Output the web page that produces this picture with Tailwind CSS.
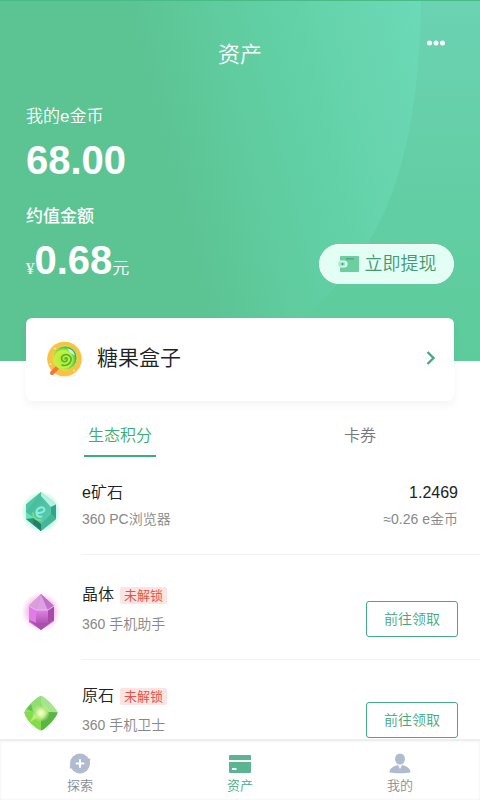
<!DOCTYPE html>
<html lang="zh-CN">
<head>
    <meta charset="UTF-8">
    <meta name="viewport" content="width=device-width, initial-scale=1.0">
    <title>资产</title>
    <script src="https://cdn.jsdelivr.net/npm/@tailwindcss/browser@4"></script>
</head>
<body class="flex h-screen flex-col bg-white font-['Liberation_Sans','Noto_Sans_CJK_SC',sans-serif] font-[350] text-[#222]">
    <main class="min-h-0 flex-1 overflow-y-auto [scrollbar-width:none]">
        <!-- 顶部资产 -->
        <header class="relative h-[361px] border-t border-[#48bb86] bg-[#5cc392] px-[26px] text-white">
            <svg class="absolute inset-0 h-full w-full" viewBox="0 0 480 361" preserveAspectRatio="none" aria-hidden="true">
                <defs>
                    <linearGradient id="outer" x1="0" y1="0" x2="0" y2="1">
                        <stop offset="0" stop-color="#6bd2b2"/>
                        <stop offset="0.6" stop-color="#62cea3"/>
                        <stop offset="1" stop-color="#5dcb9b"/>
                    </linearGradient>
                    <linearGradient id="inner" gradientUnits="userSpaceOnUse" x1="130" y1="60" x2="425" y2="-15">
                        <stop offset="0" stop-color="#5cc392"/>
                        <stop offset="0.45" stop-color="#61cfa4"/>
                        <stop offset="1" stop-color="#6ddab8"/>
                    </linearGradient>
                </defs>
                <rect width="480" height="361" fill="url(#outer)"/>
                <path d="M0 0H421C418 160 385 250 303 317C280 335 255 350 230 361H0z" fill="url(#inner)"/>
            </svg>
            <div class="relative">
                <h1 class="pt-9 text-center text-[22px] leading-9">资产</h1>
                <button type="button" aria-label="更多" class="absolute top-8 right-2 h-5 w-5">
                    <svg class="h-5 w-5" viewBox="0 0 20 20" fill="#fff">
                        <circle cx="3.500" cy="10" r="2.500"/>
                        <circle cx="10" cy="10" r="2.500"/>
                        <circle cx="16.500" cy="10" r="2.500"/>
                    </svg>
                </button>
                <p class="pt-8 text-[17px] leading-6">我的e金币</p>
                <p class="pt-[7px] text-[40px] leading-12 font-bold">68.00</p>
                <p class="pt-[21px] text-[17px] leading-6 font-medium">约值金额</p>
                <div class="flex items-start justify-between pt-[7px]">
                    <p class="text-[17px] leading-12"><span class="font-['Liberation_Serif','Noto_Sans_CJK_SC',serif]">¥</span><span class="text-[40px] font-bold">0.68</span><span>元</span></p>
                    <button type="button" class="mt-2 flex h-10 w-[135px] items-center justify-center gap-1 rounded-full border border-white bg-[#e3fef4] text-[18px] text-[#459873]">
                        <svg class="h-5 w-6" viewBox="0 0 24 20" aria-hidden="true">
                            <rect x="3" y="2" width="19" height="16" rx="1" fill="#6bcf9f"/>
                            <rect x="9" y="4" width="8" height="1.600" fill="#4fae80"/>
                            <path d="M3 6.500h4a3.500 3.500 0 0 1 0 7H3z" fill="#e3fef4"/>
                            <path d="M1.500 7.500h4.500a2.500 2.500 0 0 1 0 5H1.500z" fill="#a5ead0"/>
                            <circle cx="5.500" cy="10" r="1" fill="#3d8a66"/>
                        </svg>
                        立即提现
                    </button>
                </div>
            </div>
        </header>

        <!-- 糖果盒子 -->
        <a href="#" class="relative mx-[26px] -mt-[43px] flex h-[83px] items-center rounded-md bg-white pr-[17px] pb-[3px] pl-[18px] shadow-[0_4px_8px_rgba(0,60,40,0.05)]">
            <svg class="h-10 w-10" viewBox="0 0 40 40" aria-hidden="true">
                <defs>
                    <radialGradient id="candy" cx="0.42" cy="0.56" r="0.6">
                        <stop offset="0" stop-color="#b4e82e"/>
                        <stop offset="0.6" stop-color="#c9f03f"/>
                        <stop offset="0.85" stop-color="#52c043"/>
                        <stop offset="1" stop-color="#24a047"/>
                    </radialGradient>
                </defs>
                <ellipse cx="20.500" cy="37" rx="12" ry="3" fill="#f2f4f6"/>
                <circle cx="20.500" cy="21" r="17.300" fill="#f9c33f"/>
                <path d="M13.500 29.500L8 35" stroke="#f0783a" stroke-width="4" stroke-linecap="round"/>
                <circle cx="21" cy="20" r="12" fill="url(#candy)" stroke="#c9ee74" stroke-width="0.800"/>
                <path d="M21 21c0-1.500 2-1.500 2.300 0s-1.500 3.500-3.800 2.500-3-5 .5-6.500 8 1.500 7 5.500-5.500 6-9 4.500" fill="none" stroke="#48b43c" stroke-width="1.600" stroke-linecap="round"/>
                <path d="M23 10.500c4 0 7 3 7.800 7l-5-3z" fill="#c8f5d8"/>
                <circle cx="11" cy="10.500" r="0.900" fill="#fff0b8"/>
                <circle cx="6.500" cy="26" r="1" fill="#fff0b8"/>
                <circle cx="30" cy="32.500" r="0.900" fill="#fff0b8"/>
            </svg>
            <span class="ml-[13px] flex-1 text-[21px]">糖果盒子</span>
            <svg class="h-4 w-3" viewBox="0 0 12 16" fill="none" stroke="#4aa984" stroke-width="2.400" aria-hidden="true">
                <path d="M2.500 2L8.500 8L2.500 14"/>
            </svg>
        </a>

        <!-- 分类 -->
        <nav class="mt-5 grid grid-cols-2 text-base">
            <a href="#" class="mx-auto flex h-9 w-[72px] items-center justify-center border-b-2 border-[#3bb07a] pb-1 text-[#36ae74]">生态积分</a>
            <a href="#" class="mx-auto flex h-9 w-[72px] items-center justify-center border-b-2 border-transparent pb-1 text-[#777]">卡券</a>
        </nav>

        <!-- 积分列表 -->
        <ul class="pb-4">
            <li class="flex pl-[19px]">
                <svg class="mt-[33px] h-11 w-11 shrink-0" viewBox="0 0 44 44" aria-hidden="true">
                    <defs>
                        <radialGradient id="glowTeal">
                            <stop offset="0.7" stop-color="#a5f3d8" stop-opacity="0.8"/>
                            <stop offset="1" stop-color="#a5f3d8" stop-opacity="0"/>
                        </radialGradient>
                        <linearGradient id="gemTeal" x1="0" y1="0" x2="1" y2="1">
                            <stop offset="0" stop-color="#3fb596"/>
                            <stop offset="1" stop-color="#62d3b4"/>
                        </linearGradient>
                    </defs>
                    <ellipse cx="22" cy="22" rx="20" ry="21" fill="url(#glowTeal)"/>
                    <path d="M22 2L37 14.500V29L22 41L7 29V14.500z" fill="url(#gemTeal)"/>
                    <path d="M22 2L37 14.500L32 17L22 6z" fill="#b9f0e4"/>
                    <path d="M22 2L7 14.500V22L14 13z" fill="#52c6a6"/>
                    <path d="M37 14.500V29L32 24V17z" fill="#36a18c"/>
                    <path d="M7 22V29L14 34L15 28z" fill="#6ce0b8"/>
                    <path d="M7 29L22 41V36L15 28z" fill="#2c9478"/>
                    <path d="M37 29L22 41V34L32 24z" fill="#43b795"/>
                    <path d="M22 34L15 28L14 34L22 41z" fill="#238068"/>
                    <path d="M17.500 22.500c3 1 7.500 0 8-2.500.3-2-2-3-4-2.500-3 .8-4.500 3.500-4 6s2.500 3.500 5 3" fill="none" stroke="#8aeee4" stroke-width="2" stroke-linecap="round"/>
                    <path d="M14 23c0 5 3 7.500 8 7" fill="none" stroke="#8be06e" stroke-width="1.500" stroke-linecap="round"/>
                </svg>
                <div class="ml-[19px] flex flex-1 justify-between border-b border-[#f2f2f2] pt-6 pr-[22px] pb-[25px]">
                    <div>
                        <h2 class="text-base leading-6">e矿石</h2>
                        <p class="mt-1 text-sm leading-5 text-[#888]">360 PC浏览器</p>
                    </div>
                    <div class="text-right">
                        <p class="text-base leading-6">1.2469</p>
                        <p class="mt-1 text-sm leading-5 text-[#888]">≈0.26 e金币</p>
                    </div>
                </div>
            </li>
            <li class="flex pl-[19px]">
                <svg class="mt-9 h-11 w-11 shrink-0" viewBox="0 0 44 44" aria-hidden="true">
                    <defs>
                        <radialGradient id="glowPink">
                            <stop offset="0.65" stop-color="#f3b4e6" stop-opacity="0.8"/>
                            <stop offset="1" stop-color="#f9d3f0" stop-opacity="0"/>
                        </radialGradient>
                        <linearGradient id="gemPink" x1="0" y1="0" x2="0" y2="1">
                            <stop offset="0" stop-color="#dc84e2"/>
                            <stop offset="1" stop-color="#b552b6"/>
                        </linearGradient>
                    </defs>
                    <circle cx="22" cy="21" r="20" fill="url(#glowPink)"/>
                    <path d="M22 3L35 15V30L22 39L10 31V15z" fill="#c66cc9"/>
                    <path d="M22 3L10 15L17 19z" fill="#d8a0da"/>
                    <path d="M22 3L17 19H29z" fill="#dda0e2"/>
                    <path d="M22 3L35 15L29 19z" fill="#c070c6"/>
                    <path d="M10 15L17 19V32L10 29z" fill="#e07be8"/>
                    <path d="M17 19H29V32H17z" fill="url(#gemPink)"/>
                    <path d="M29 19L35 15V29L29 32z" fill="#a84ca8"/>
                    <path d="M10 29L17 32H29L35 29L22 39z" fill="#a950ab"/>
                    <path d="M10 15L17 19H29L35 15" fill="none" stroke="#f0b8f3" stroke-width="1"/>
                </svg>
                <div class="ml-[19px] flex flex-1 items-start justify-between border-b border-[#f2f2f2] pt-7 pr-[22px] pb-[22px]">
                    <div>
                        <h2 class="flex items-center gap-[6px] text-base leading-6">晶体 <span class="rounded-xs bg-[#fde4e2] px-1 text-[13px] leading-[17px] font-normal text-[#e2564a]">未解锁</span></h2>
                        <p class="mt-[7px] text-sm leading-5 text-[#888]">360 手机助手</p>
                    </div>
                    <button type="button" class="mt-[18px] h-9 w-[92px] rounded-[3px] border border-[#45aa83] text-sm text-[#3fa87e]">前往领取</button>
                </div>
            </li>
            <li class="flex pl-[19px]">
                <svg class="mt-8 h-11 w-11 shrink-0" viewBox="0 0 44 44" aria-hidden="true">
                    <defs>
                        <radialGradient id="glowLime">
                            <stop offset="0" stop-color="#fbffd9"/>
                            <stop offset="0.35" stop-color="#d9f7a0"/>
                            <stop offset="1" stop-color="#d9f7a0" stop-opacity="0"/>
                        </radialGradient>
                    </defs>
                    <path d="M22 4C26 5 36 15 38.500 20.500C38 25 27 37 22 38.500C17 37 6 27 5.500 20.500C7 15 18 5 22 4z" fill="#7ad158"/>
                    <path d="M22 4C18 5 7 15 5.500 20.500L14 20L22 12z" fill="#90dd72"/>
                    <path d="M22 4C26 5 36 15 38.500 20.500L30 20L22 12z" fill="#a6e58c"/>
                    <path d="M5.500 20.500C6 27 17 37 22 38.500V29L14 20z" fill="#84dc4a"/>
                    <path d="M38.500 20.500C38 25 27 37 22 38.500V29L30 20z" fill="#5bb542"/>
                    <path d="M8 17L14 20L12 12z" fill="#62bf52"/>
                    <path d="M11 30L15 22L18 26z" fill="#b3ef6d"/>
                    <circle cx="22" cy="21" r="9" fill="url(#glowLime)"/>
                </svg>
                <div class="ml-[19px] flex flex-1 items-start justify-between pt-6 pr-[22px] pb-6">
                    <div>
                        <h2 class="flex items-center gap-[6px] text-base leading-6">原石 <span class="rounded-xs bg-[#fde4e2] px-1 text-[13px] leading-[17px] font-normal text-[#e2564a]">未解锁</span></h2>
                        <p class="mt-[7px] text-sm leading-5 text-[#888]">360 手机卫士</p>
                    </div>
                    <button type="button" class="mt-[18px] h-9 w-[92px] rounded-[3px] border border-[#45aa83] text-sm text-[#3fa87e]">前往领取</button>
                </div>
            </li>
        </ul>
    </main>

    <!-- 底部导航 -->
    <nav class="grid h-[61px] shrink-0 grid-cols-3 border-t-2 border-[#eee] bg-white text-[13px] leading-5 text-[#868d99] shadow-[inset_0_0_3px_rgba(0,0,0,0.08)]">
        <a href="#" class="flex flex-col items-center pt-[11px]">
            <svg class="h-6 w-6" viewBox="0 0 24 24" aria-hidden="true">
                <circle cx="12" cy="11.500" r="10" fill="#b1bbcf"/>
                <path d="M17 7L22.500 6.500L21 12zM7 16L1.500 16.500L3 11z" fill="#b1bbcf"/>
                <path d="M12 8v7M8.500 11.500h7" stroke="#fff" stroke-width="2" stroke-linecap="round"/>
            </svg>
            探索
        </a>
        <a href="#" class="flex flex-col items-center pt-[11px] text-[#45aa83]">
            <svg class="h-6 w-6" viewBox="0 0 24 24" fill="#5cb592" aria-hidden="true">
                <path d="M2 3h20a1 1 0 0 1 1 1v4H1V4a1 1 0 0 1 1-1z"/>
                <path d="M1 10h22v10a1 1 0 0 1-1 1H2a1 1 0 0 1-1-1z"/>
                <path d="M4 17h4.500" stroke="#fff" stroke-width="2"/>
            </svg>
            资产
        </a>
        <a href="#" class="flex flex-col items-center pt-[11px]">
            <svg class="h-6 w-6" viewBox="0 0 24 24" fill="#b1bbcf" aria-hidden="true">
                <ellipse cx="12" cy="7" rx="5" ry="5.500"/>
                <path d="M1.500 20.500c0-4.500 4-6.500 8.500-7.500l2 4 2-4c4.500 1 8.500 3 8.500 7.500-5 1-16 1-21 0z"/>
            </svg>
            我的
        </a>
    </nav>
</body>
</html>
